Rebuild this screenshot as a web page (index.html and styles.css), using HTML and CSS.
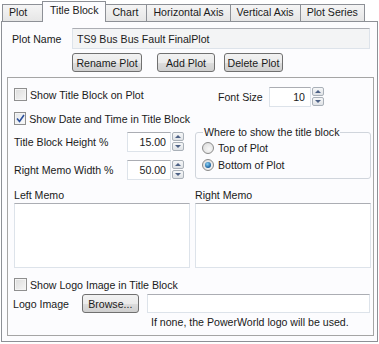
FILE: index.html
```html
<!DOCTYPE html>
<html lang="en">
<head>
  <meta charset="UTF-8">
  <title>Plot Options - Title Block</title>
  <link rel="stylesheet" href="styles.css">
</head>
<body>

<div class="tabs">
  <div class="tab">Plot</div>
  <div class="tab active">Title Block</div>
  <div class="tab">Chart</div>
  <div class="tab">Horizontal Axis</div>
  <div class="tab">Vertical Axis</div>
  <div class="tab">Plot Series</div>
</div>

<div class="panel">
  <div class="name-row">
    <span class="name-label">Plot Name</span>
    <input type="text" class="edit name-edit" value="TS9 Bus Bus Fault FinalPlot" readonly>
  </div>
  <div class="plot-buttons">
    <button class="btn btn-rename">Rename Plot</button>
    <button class="btn btn-add">Add Plot</button>
    <button class="btn btn-delete">Delete Plot</button>
  </div>

  <div class="group">
    <div class="top">
      <div class="col-left">
        <label class="check row-show"><span class="box"></span>Show Title Block on Plot</label>
        <label class="check row-date"><span class="box checked">
          <svg width="9" height="9" viewBox="0 0 9 9"><path d="M1 4.5 L3.5 7.5 L8 1" fill="none" stroke="#2b4f9c" stroke-width="1.6"/></svg>
        </span>Show Date and Time in Title Block</label>
        <div class="num-row row-height">
          <span class="num-label">Title Block Height %</span>
          <input type="text" class="edit num" value="15.00">
          <span class="spin"><span class="up"></span><span class="down"></span></span>
        </div>
        <div class="num-row row-width">
          <span class="num-label">Right Memo Width %</span>
          <input type="text" class="edit num" value="50.00">
          <span class="spin"><span class="up"></span><span class="down"></span></span>
        </div>
      </div>

      <div class="col-right">
        <div class="font-row">
          <span class="font-label">Font Size</span>
          <input type="text" class="edit num font" value="10">
          <span class="spin"><span class="up"></span><span class="down"></span></span>
        </div>
        <fieldset class="where">
          <legend>Where to show the title block</legend>
          <label class="radio"><span class="dot"></span>Top of Plot</label>
          <label class="radio"><span class="dot on"></span>Bottom of Plot</label>
        </fieldset>
      </div>
    </div>

    <div class="memos">
      <div class="memo">
        <span class="memo-label">Left Memo</span>
        <textarea class="memo-box"></textarea>
      </div>
      <div class="memo">
        <span class="memo-label">Right Memo</span>
        <textarea class="memo-box"></textarea>
      </div>
    </div>

    <label class="check row-logo"><span class="box"></span>Show Logo Image in Title Block</label>
    <div class="logo-row">
      <span class="logo-label">Logo Image</span>
      <button class="btn btn-browse">Browse...</button>
      <input type="text" class="edit logo-edit" value="">
    </div>
    <div class="note">If none, the PowerWorld logo will be used.</div>
  </div>
</div>

</body>
</html>
```

FILE: styles.css
```css
* {
  box-sizing: border-box;
  font-family: 'Liberation Sans', Arial, sans-serif;
  margin: 0;
  padding: 0;
}

body {
  background-color: #fff;
  color: #1a1a1a;
  font-size: 10.6px;
  width: 379px;
  height: 344px;
  padding: 0 1px;
}

/* tab strip */
.tabs {
  display: flex;
  align-items: flex-end;
  height: 21px;
  padding-left: 1px;
  position: relative;
  z-index: 1;
}

.tab {
  height: 17px;
  line-height: 15px;
  min-width: 42px;
  padding: 0 6px;
  border: 1px solid #8d9096;
  border-bottom: none;
  margin-right: -1px;
  background: linear-gradient(#f5f5f5, #e6e6e6);
  white-space: nowrap;
}

.tab.active {
  height: 21px;
  line-height: 17px;
  margin: 0 -1px -1px -1px;
  padding: 0 7px;
  background: #fcfcfe;
  position: relative;
  z-index: 2;
}

.panel {
  border: 1px solid #8d9096;
  background-color: #fcfcfe;
  height: 321px;
  padding: 6px 0 0 0;
}

/* plot name */
.name-row {
  display: flex;
  align-items: center;
  height: 21px;
}

.name-label {
  width: 70px;
  padding-left: 10px;
}

.edit {
  border: 1px solid #dde3ea;
  border-top-color: #abadb3;
  background: #fff;
  font-size: 10.6px;
  color: #1a1a1a;
  padding: 0 4px;
  outline: none;
}

.name-edit {
  width: 298px;
  height: 21px;
  background: #f3f4f5;
}

.plot-buttons {
  display: flex;
  margin: 4px 0 0 70px;
}

.btn {
  height: 19px;
  border: 1px solid #707070;
  border-radius: 3px;
  background: linear-gradient(#f2f2f2 0%, #ebebeb 50%, #dddddd 51%, #cfcfcf 100%);
  font-size: 10.6px;
  color: #1a1a1a;
  padding: 0;
  white-space: nowrap;
}

.btn-rename { width: 70px; }
.btn-add { width: 58px; margin-left: 15px; }
.btn-delete { width: 59px; margin-left: 9px; }

/* main group box */
.group {
  margin: 5px 3px 0 5px;
  border: 1px solid #a5a5a5;
  height: 259px;
  padding: 10px 3px 0 6px;
}

.top {
  display: grid;
  grid-template-columns: 176px 176px;
  column-gap: 5px;
}

.col-left {
  display: flex;
  flex-direction: column;
}

.check {
  display: flex;
  align-items: center;
  height: 13px;
  white-space: nowrap;
}

.box {
  width: 13px;
  height: 13px;
  border: 1px solid #8f8f8f;
  background: linear-gradient(135deg, #dcdcdc, #f6f6f6);
  box-shadow: inset 0 0 0 1px #f4f4f4;
  margin-right: 3px;
  display: flex;
  align-items: center;
  justify-content: center;
}

.box.checked {
  background: linear-gradient(135deg, #e2e6ea, #fafafa);
}

.row-date { margin-top: 11px; }
.row-height { margin-top: 7px; }
.row-width { margin-top: 8px; }

.num-row, .font-row {
  display: flex;
  align-items: center;
  height: 20px;
}

.num-label {
  width: 113px;
}

.num {
  width: 44px;
  height: 20px;
  text-align: right;
}

.spin {
  display: flex;
  flex-direction: column;
  gap: 1px;
  margin-left: 1px;
  height: 20px;
}

.spin span {
  width: 12px;
  height: 9px;
  border: 1px solid #a9b0b8;
  border-radius: 2px;
  background: linear-gradient(#f6f7f8, #dfe2e6);
  display: flex;
  align-items: center;
  justify-content: center;
}

.spin .up::after {
  content: "";
  border-left: 3px solid transparent;
  border-right: 3px solid transparent;
  border-bottom: 3px solid #4d6185;
}

.spin .down::after {
  content: "";
  border-left: 3px solid transparent;
  border-right: 3px solid transparent;
  border-top: 3px solid #4d6185;
}

.font-row {
  margin-top: -1px;
  padding-left: 23px;
}

.font-label {
  width: 51px;
}

.num.font {
  width: 42px;
  padding-right: 5px;
}

.where {
  margin-top: 19px;
  border: 1px solid #d0d5dc;
  border-radius: 3px;
  height: 53px;
  padding: 0 0 0 6px;
}

.where legend {
  padding: 0 1px;
  margin-left: 1px;
  line-height: 13px;
}

.radio {
  display: flex;
  align-items: center;
  height: 12px;
  margin-top: 3px;
}

.radio + .radio {
  margin-top: 5px;
}

.dot {
  width: 12px;
  height: 12px;
  border-radius: 50%;
  border: 1px solid #8a8a8a;
  background: radial-gradient(circle at 60% 60%, #f8f8f8, #d8d8d8);
  margin-right: 4px;
  display: flex;
  align-items: center;
  justify-content: center;
}

.dot.on::after {
  content: "";
  width: 6px;
  height: 6px;
  border-radius: 50%;
  background: radial-gradient(circle at 40% 35%, #8ad2f5, #1a5f9e 70%, #0f3c6e);
}

/* memos */
.memos {
  display: grid;
  grid-template-columns: 176px 176px;
  column-gap: 5px;
  margin-top: 9px;
}

.memo {
  display: flex;
  flex-direction: column;
}

.memo-label {
  line-height: 13px;
  margin-bottom: 1px;
}

.memo-box {
  height: 65px;
  border: 1px solid #dde3ea;
  border-top-color: #abadb3;
  background: #fff;
  resize: none;
}

.row-logo {
  margin-top: 10px;
}

.logo-row {
  display: flex;
  align-items: center;
  margin-top: 3px;
  height: 19px;
}

.logo-label {
  width: 70px;
  margin-left: -1px;
}

.btn-browse {
  width: 58px;
}

.logo-edit {
  width: 227px;
  height: 19px;
  margin-left: 8px;
}

.note {
  margin: 3px 0 0 137px;
  line-height: 13px;
}
```
